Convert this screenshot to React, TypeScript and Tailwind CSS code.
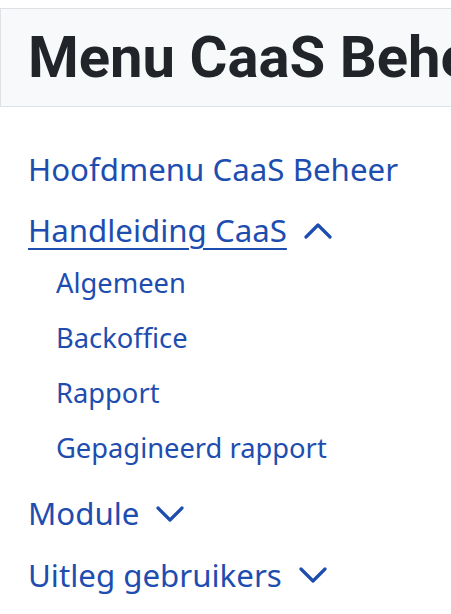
const subItems = ["Algemeen", "Backoffice", "Rapport", "Gepagineerd rapport"];

function Chevron({ up }: { up?: boolean }) {
  return (
    <svg className="w-[28px] h-[16px] ml-[17px] shrink-0" viewBox="0 0 28 16" fill="none" stroke="currentColor" strokeWidth={3.2} strokeLinecap="round" strokeLinejoin="round">
      {up ? <path d="M2 14L14 2l12 12" /> : <path d="M2 2l12 12L26 2" />}
    </svg>
  );
}

export default function App() {
  return (
    <div className="w-[451px] h-[614px] overflow-hidden bg-white font-['Noto_Sans',sans-serif]">
      <div className="mt-[8px] w-[620px] bg-[#f8f9fa] border border-[#dee2e6] pl-[27px] py-[15px] whitespace-nowrap">
        <h1 className="font-['Roboto',sans-serif] font-bold text-[58px] leading-[67px] text-[#212529]">Menu CaaS Beheer</h1>
      </div>

      <ul className="pt-[32px] pl-[28px] text-[#1e4db0]">
        <li className="text-[31.25px] leading-[61px]">Hoofdmenu CaaS Beheer</li>
        <li className="text-[31.25px] leading-[61px] flex items-center">
          <span className="underline decoration-[2px] underline-offset-[6px]">Handleiding CaaS</span>
          <Chevron up />
        </li>
        <li className="-mt-[6px] mb-[8px]">
          <ul className="pl-[28px] text-[27.3px] leading-[55px]">
            {subItems.map((s) => (
              <li key={s}>{s}</li>
            ))}
          </ul>
        </li>
        <li className="text-[31.25px] leading-[61px] flex items-center">
          Module
          <Chevron />
        </li>
        <li className="text-[31.25px] leading-[62px] flex items-center">
          Uitleg gebruikers
          <Chevron />
        </li>
      </ul>
    </div>
  );
}
